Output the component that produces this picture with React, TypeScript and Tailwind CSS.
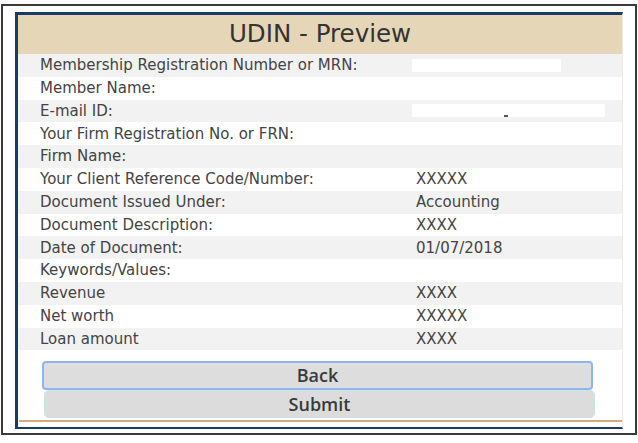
const rows: { label: string; value?: string; mask?: "mrn" | "email" }[] = [
  { label: "Membership Registration Number or MRN:", mask: "mrn" },
  { label: "Member Name:" },
  { label: "E-mail ID:", mask: "email" },
  { label: "Your Firm Registration No. or FRN:" },
  { label: "Firm Name:" },
  { label: "Your Client Reference Code/Number:", value: "XXXXX" },
  { label: "Document Issued Under:", value: "Accounting" },
  { label: "Document Description:", value: "XXXX" },
  { label: "Date of Document:", value: "01/07/2018" },
  { label: "Keywords/Values:" },
  { label: "Revenue", value: "XXXX" },
  { label: "Net worth", value: "XXXXX" },
  { label: "Loan amount", value: "XXXX" },
];

const App = () => {
  return (
    <div className="w-[638px] h-[443px] bg-white pt-[4px] pl-[1px] overflow-hidden">
      <div className="w-[636px] h-[431px] border-2 border-[#3a3a3a] pl-[12px] pt-[6px]">
        <div className="w-[608px] h-[417px] flex flex-col bg-white border-l-[3px] border-t-[3px] border-b-[2px] border-r border-[#1d3a64] border-r-[#f4e8e2]">
          <div className="h-[39px] shrink-0 bg-[#e5d6b8] flex items-center justify-center text-[24.5px] text-[#333333] font-['DejaVu_Sans',sans-serif]">
            UDIN - Preview
          </div>

          <div className="flex flex-col font-['DejaVu_Sans',sans-serif] text-[15px] text-[#444444]">
            {rows.map((r, i) => (
              <div key={r.label} className={`h-[22.8px] grid grid-cols-[376px_1fr] items-center pl-[22px] ${i % 2 === 0 ? "bg-[#f2f2f2]" : "bg-white"}`}>
                <span className="whitespace-nowrap">{r.label}</span>
                {r.mask === "mrn" && <span className="-ml-[4px] block w-[149px] h-[13px] bg-white" />}
                {r.mask === "email" && (
                  <span className="-ml-[4px] flex items-end w-[193px] h-[13px] bg-white pl-[92px]">
                    <span className="block w-[4px] h-[2px] bg-[#555555]" />
                  </span>
                )}
                {r.value && <span className="whitespace-nowrap">{r.value}</span>}
              </div>
            ))}
          </div>

          <div className="mt-[11px] flex flex-col font-['Open_Sans',sans-serif] text-[18px] font-semibold text-[#3a3a3a]">
            <button className="ml-[24px] w-[551px] h-[29px] flex items-center justify-center bg-[#dddddd] border-2 border-[#8db6ee] rounded-[4px]">
              Back
            </button>
            <button className="ml-[26px] w-[551px] h-[28px] flex items-center justify-center bg-[#dcdcdc] border-[1.5px] border-[#c6e2ea] rounded-[5px]">
              Submit
            </button>
          </div>

          <div className="mt-[2px] ml-[1px] h-[2px] bg-[#d6a883]" />
        </div>
      </div>
    </div>
  );
};

export default App;
